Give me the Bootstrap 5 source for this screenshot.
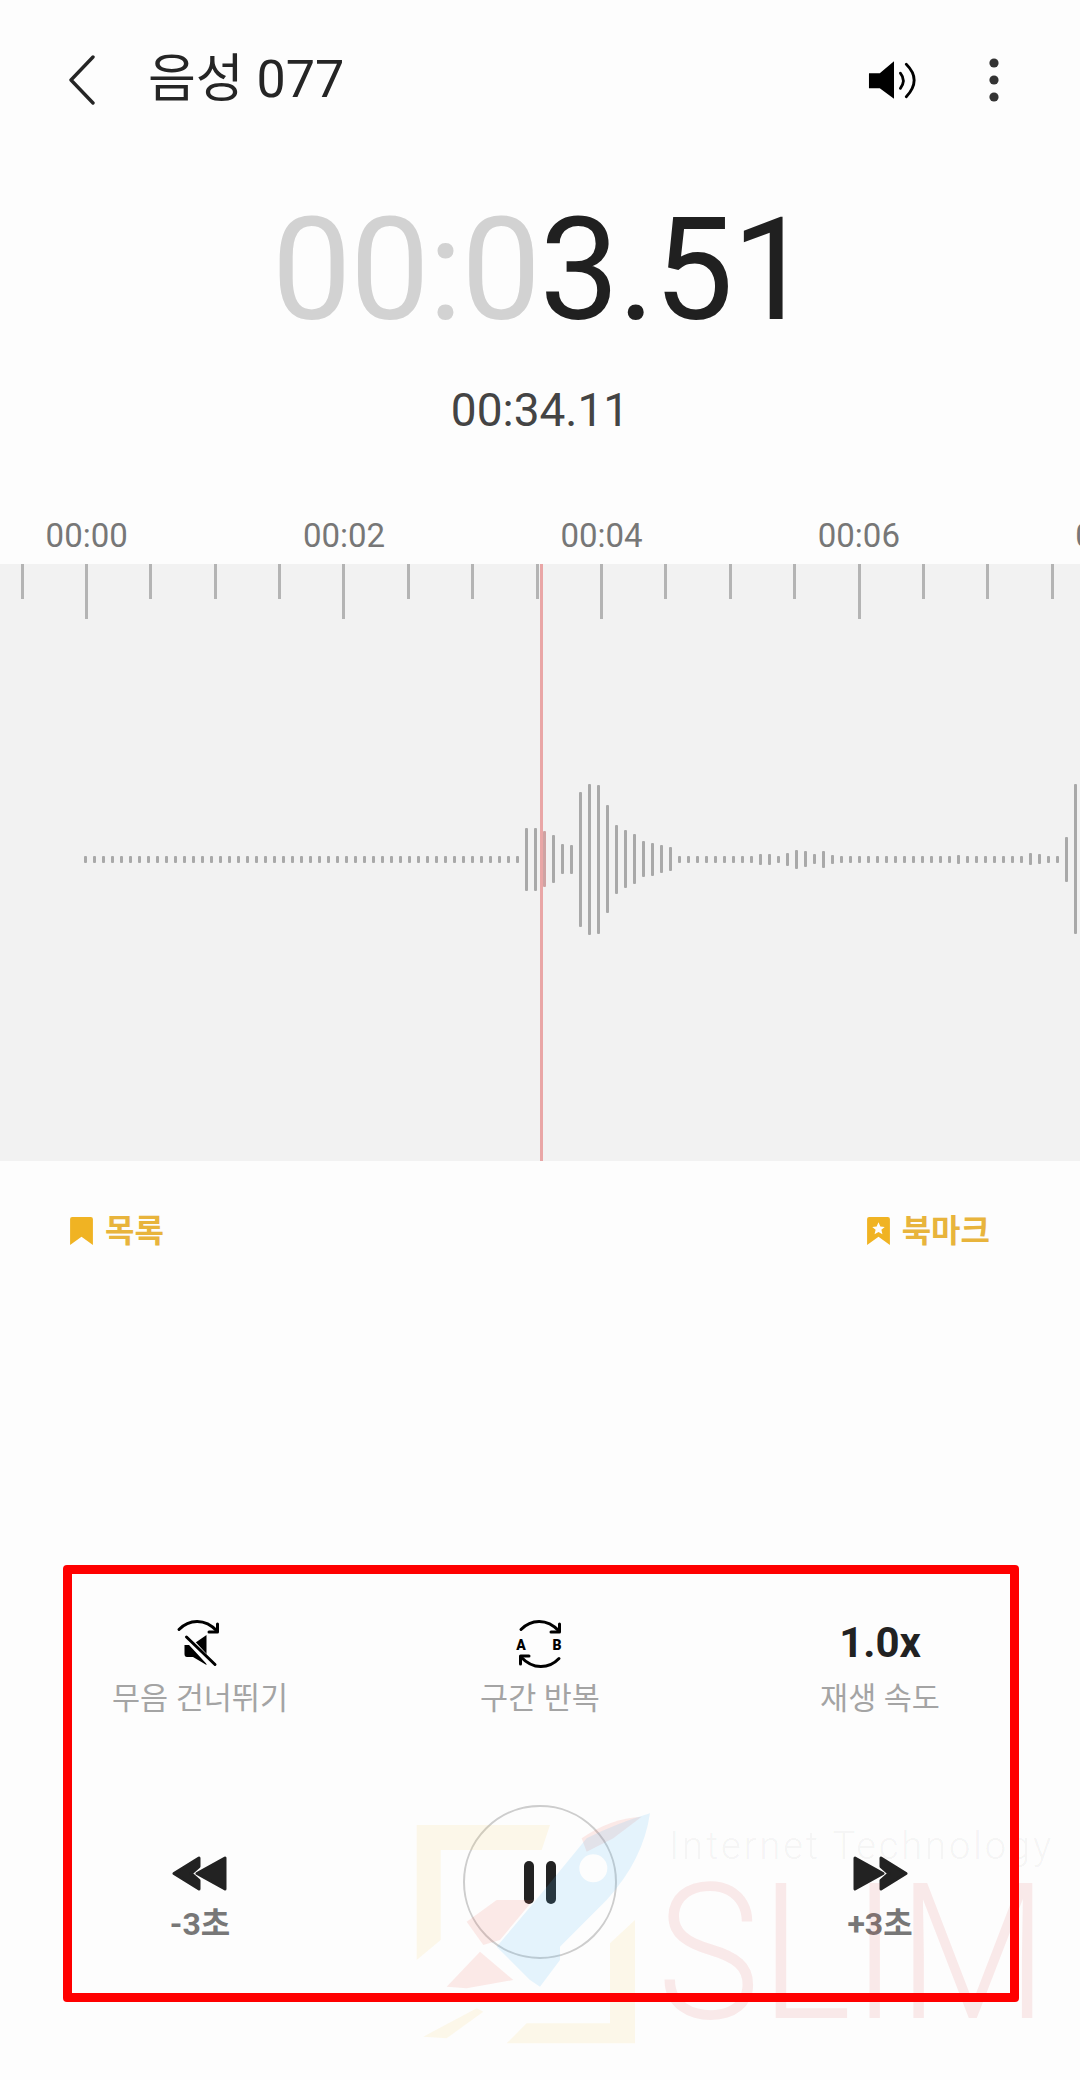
<!DOCTYPE html>
<html lang="ko">

<head>
    <meta charset="utf-8">
    <title>음성 077</title>
    <link rel="stylesheet" href="https://cdn.jsdelivr.net/npm/bootstrap@5.3.0/dist/css/bootstrap.min.css">
    <style>
        body {
            width: 1080px;
            height: 2080px;
            overflow: hidden;
            position: relative;
            background: #fdfdfd;
            font-family: Roboto, "Noto Sans CJK KR", sans-serif;
        }

        .top_bar {
            height: 160px;
            padding-left: 68px;
        }

        .rec_title {
            margin-left: 53px;
            font-size: 52px;
            color: #252525;
            line-height: 1;
        }

        .speaker_btn {
            margin-left: auto;
            margin-right: 66px;
        }

        .more_btn {
            margin-right: 80px;
        }

        .time_now {
            margin-top: 40px;
            padding-left: 2px;
            font-size: 142px;
            line-height: 142px;
            color: #202020;
            letter-spacing: -1.5px;
        }

        .time_now span {
            color: #d2d2d2;
        }

        .time_total {
            margin-top: 42px;
            font-size: 46px;
            line-height: 52px;
            color: #444;
        }

        .ruler_labels {
            margin-top: 80px;
            margin-left: -42px;
            width: 1400px;
            height: 48px;
            font-size: 33px;
            line-height: 40px;
            color: #777;
        }

        .ruler_labels div {
            width: 257.4px;
            flex: none;
            text-align: center;
        }

        .wave_area {
            height: 597px;
            background: #f2f2f2;
            position: relative;
            overflow: hidden;
        }

        .tick_row {
            height: 55px;
            gap: 61.4px;
            padding-left: 20.5px;
        }

        .tick_mark {
            width: 3px;
            height: 35px;
            flex: none;
            background: #b4b4b4;
        }

        .tick_long {
            height: 55px;
        }

        .wave_row {
            margin-top: 164px;
            height: 152px;
            gap: 6px;
            padding-left: 84px;
        }

        .wave_bar {
            width: 3px;
            flex: none;
            background: #a9a9a9;
            border-radius: 1px;
        }

        .play_head {
            position: absolute;
            left: 540px;
            top: 0;
            bottom: 0;
            width: 3px;
            background: #e9a6a6;
        }

        .mark_row {
            margin-top: 53px;
            padding: 0 90px 0 70px;
            height: 34px;
            font-size: 32px;
            font-weight: 700;
            line-height: 34px;
            color: #e8b43c;
        }

        .ctrl_grid {
            width: 1020px;
            margin-left: 30px;
        }

        .ctrl_top {
            margin-top: 368px;
        }

        .ctrl_icon {
            height: 50px;
        }

        .ctrl_icon svg {
            margin-top: -4px;
        }

        .speed_txt {
            font-size: 42px;
            font-weight: 700;
            line-height: 54px;
            color: #222;
        }

        .ctrl_label {
            margin-top: 15px;
            font-size: 30.5px;
            line-height: 36px;
            color: #a4a4a4;
        }

        .play_row {
            margin-top: 88px;
        }

        .skip_col {
            padding-top: 51px;
        }

        .skip_back {
            margin-left: -2px;
        }

        .skip_label {
            margin-top: 16px;
            font-size: 32px;
            font-weight: 700;
            line-height: 34px;
            color: #777;
        }

        .pause_ring {
            width: 154px;
            height: 154px;
            border: 2px solid #cdcdcd;
            gap: 12px;
        }

        .pause_bar {
            width: 10px;
            height: 43px;
            border-radius: 5px;
            background: #222;
        }

        .stamp_mark {
            position: absolute;
            left: 400px;
            top: 1780px;
            pointer-events: none;
        }

        .red_box {
            position: absolute;
            left: 63px;
            top: 1565px;
            width: 956px;
            height: 437px;
            border: 9px solid #f00;
            border-radius: 4px;
        }
    </style>
</head>

<body>
    <div class="d-flex align-items-center top_bar">
        <svg width="27" height="50" viewBox="0 0 27 50" fill="none" stroke="#252525" stroke-width="3.4" stroke-linecap="round" stroke-linejoin="round">
            <path d="M25 2 L3 25 L25 48" />
        </svg>
        <div class="rec_title">음성 077</div>
        <svg class="speaker_btn" width="55" height="42" viewBox="12 12 56 42" fill="none" stroke="#000" stroke-width="2.8" stroke-linecap="round">
            <path d="M14 26 H25 L39.5 14 V52 L25 41.5 H14 Z" fill="#000" stroke="none" />
            <path d="M46 26 Q52 33.5 46 41.5" />
            <path d="M52 17 Q68 33 52 50" />
        </svg>
        <svg class="more_btn" width="12" height="46" viewBox="0 0 12 46" fill="#333">
            <circle cx="6" cy="6" r="4.6" />
            <circle cx="6" cy="23" r="4.6" />
            <circle cx="6" cy="40" r="4.6" />
        </svg>
    </div>

    <div class="text-center time_now"><span>00:0</span>3.51</div>
    <div class="text-center time_total">00:34.11</div>

    <div class="d-flex ruler_labels">
        <div>00:00</div>
        <div>00:02</div>
        <div>00:04</div>
        <div>00:06</div>
        <div>00:08</div>
    </div>

    <div class="wave_area">
        <div class="d-flex tick_row" id="ticks"></div>
        <div class="d-flex align-items-center wave_row" id="wave"></div>
        <div class="play_head"></div>
    </div>

    <div class="d-flex justify-content-between mark_row">
        <div class="d-flex align-items-center gap-2">
            <svg width="23" height="28" viewBox="0 0 22 27" fill="#f0b323">
                <path d="M0 2 Q0 0 2 0 H20 Q22 0 22 2 V27 L11 19 L0 27 Z" />
            </svg>
            <span class="ms-1">목록</span>
        </div>
        <div class="d-flex align-items-center gap-2">
            <svg width="23" height="28" viewBox="0 0 22 27" fill="#f0b323">
                <path d="M0 2 Q0 0 2 0 H20 Q22 0 22 2 V27 L11 19 L0 27 Z" />
                <path fill="#fdfdfd" d="M11 5 L12.8 9.2 L17 9.6 L13.8 12.4 L14.8 16.6 L11 14.4 L7.2 16.6 L8.2 12.4 L5 9.6 L9.2 9.2 Z" />
            </svg>
            <span class="ms-1">북마크</span>
        </div>
    </div>

    <div class="row g-0 ctrl_grid ctrl_top text-center">
        <div class="col-4">
            <div class="ctrl_icon">
                <svg width="70" height="65" viewBox="0 0 70 65" fill="none" stroke="#000" stroke-width="3" stroke-linecap="round" stroke-linejoin="round">
                    <path d="M14 17.5 C24 7 40 6 52 19" />
                    <path d="M52.5 12 V20 H44" />
                    <path d="M19.5 33 H27 L41.5 23 V53 L28 45 H22 Q19.5 45 19.5 42 Z" fill="#000" stroke="none" />
                    <path d="M19 22.5 L49 55" stroke="#fdfdfd" stroke-width="7" />
                    <path d="M21.5 25 L50 52.5" />
                </svg>
            </div>
            <div class="ctrl_label">무음 건너뛰기</div>
        </div>
        <div class="col-4">
            <div class="ctrl_icon">
                <svg width="70" height="65" viewBox="0 0 70 65" fill="none" stroke="#000" stroke-width="3" stroke-linecap="round" stroke-linejoin="round">
                    <path d="M16 17.5 C26 7 42 6 54 19" />
                    <path d="M54.5 12 V20 H46" />
                    <path d="M54 46.5 C44 57 28 58 16 45" />
                    <path d="M15.5 52 V44 H24" />
                    <text x="16" y="38" text-anchor="middle" font-family="Roboto" font-weight="900" font-size="14" fill="#000" stroke="none">A</text>
                    <text x="52" y="38" text-anchor="middle" font-family="Roboto" font-weight="900" font-size="14" fill="#000" stroke="none">B</text>
                </svg>
            </div>
            <div class="ctrl_label">구간 반복</div>
        </div>
        <div class="col-4">
            <div class="ctrl_icon speed_txt">1.0x</div>
            <div class="ctrl_label">재생 속도</div>
        </div>
    </div>

    <div class="row g-0 ctrl_grid text-center play_row">
        <div class="col-4 skip_col">
            <svg class="skip_back" width="55" height="35" viewBox="0 0 55 35" fill="#222" stroke="#222" stroke-width="3" stroke-linejoin="round">
                <path d="M2 17.5 L27 2 V10.5 L19 17.5 L27 24.5 V33 Z" />
                <path d="M25 17.5 L53 2 V33 Z" />
            </svg>
            <div class="skip_label">-3초</div>
        </div>
        <div class="col-4 d-flex justify-content-center">
            <div class="d-flex align-items-center justify-content-center rounded-circle pause_ring">
                <div class="pause_bar"></div>
                <div class="pause_bar"></div>
            </div>
        </div>
        <div class="col-4 skip_col">
            <svg width="55" height="35" viewBox="0 0 55 35" fill="#222" stroke="#222" stroke-width="3" stroke-linejoin="round">
                <path d="M2 2 L30 17.5 L2 33 Z" />
                <path d="M53 17.5 L28 2 V10.5 L36 17.5 L28 24.5 V33 Z" />
            </svg>
            <div class="skip_label">+3초</div>
        </div>
    </div>

    <!-- faint stamp lies over the controls, red box lies over the stamp -->
    <svg class="stamp_mark" width="680" height="300" viewBox="0 0 680 300">
        <g transform="scale(0.3333)">
            <g fill="rgb(250,200,60)" fill-opacity="0.1">
                <path d="M50 135 H450 L425 210 H122 V480 L50 540 Z" />
                <path d="M705 420 V790 H320 L380 730 H630 V490 Z" />
                <path d="M70 770 L230 685 L250 695 L140 775 Z" />
            </g>
            <g fill="rgb(240,90,70)" fill-opacity="0.12">
                <path d="M545 175 Q630 115 725 110 L640 175 L560 215 Z" />
                <path d="M200 425 L290 360 H400 L300 480 L250 495 Z" />
                <path d="M140 620 L240 515 L340 600 L200 625 Z" />
            </g>
            <path fill="rgb(80,185,245)" fill-opacity="0.14" fill-rule="evenodd"
                d="M750 100 Q730 240 620 360 L480 500 V540 L420 620 L390 600 L290 500 L400 370 L560 175 Q650 130 750 100 Z M622 265 A42 42 0 1 0 538 265 A42 42 0 1 0 622 265 Z" />
        </g>
        <text x="269" y="79" font-family="Roboto" font-weight="300" font-size="38" textLength="382" fill="#000" fill-opacity="0.05">Internet Technology</text>
        <text x="257" y="238" font-family="Roboto" font-weight="300" font-size="190" textLength="391" lengthAdjust="spacingAndGlyphs" fill="rgb(220,60,60)" fill-opacity="0.1">SLIM</text>
    </svg>

    <div class="red_box"></div>

    <script>
        // ruler ticks, every fourth one is long
        const ticks = document.getElementById('ticks');
        for (let i = 0; i < 17; i++) {
            const t = document.createElement('div');
            t.className = i % 4 == 1 ? 'tick_mark tick_long' : 'tick_mark';
            ticks.appendChild(t);
        }

        // waveform heights, anything not listed is the flat 7px line
        const heights = {
            49: 63, 50: 63, 51: 56, 52: 48, 53: 30, 54: 29, 55: 135, 56: 151, 57: 149, 58: 108,
            59: 69, 60: 58, 61: 50, 62: 36, 63: 33, 64: 28, 65: 24,
            75: 11, 76: 11, 78: 13, 79: 19, 80: 16, 81: 10, 82: 17, 83: 9,
            97: 9, 105: 12, 106: 10, 109: 45, 110: 150
        };
        const wave = document.getElementById('wave');
        for (let i = 0; i < 111; i++) {
            const b = document.createElement('div');
            b.className = 'wave_bar';
            b.style.height = (heights[i] || 7) + 'px';
            if (i == 51) b.style.background = '#cfa3a3';
            wave.appendChild(b);
        }
    </script>
</body>

</html>
